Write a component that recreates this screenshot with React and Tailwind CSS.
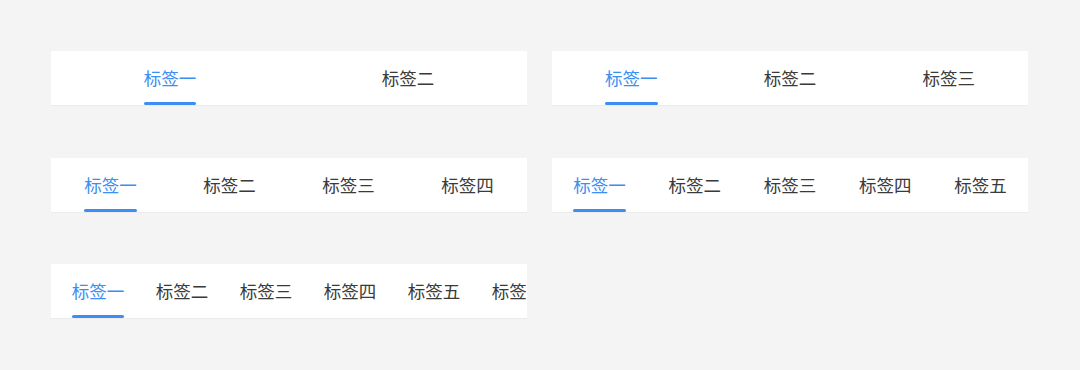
import React from 'react';

const LABELS = ['标签一', '标签二', '标签三', '标签四', '标签五', '标签六'];

const TabBar = ({ count, scroll = false }) => {
    const tabs = LABELS.slice(0, count);
    return (
        <div className="h-[54px] bg-white shadow-[0_1px_0_#ececec] overflow-hidden">
            <div className={scroll ? 'flex h-full pl-[5px]' : 'flex h-full'}>
                {tabs.map((label, i) => (
                    <div
                        key={label}
                        className={`${scroll ? 'w-[84px] shrink-0' : 'flex-1'} flex justify-center h-full`}
                    >
                        <div className="relative flex items-center h-full">
                            <span
                                className={`text-[17.5px] leading-none ${i === 0 ? 'text-[#3b8ef2]' : 'text-[#3a3a3a]'}`}
                            >
                                {label}
                            </span>
                            {i === 0 && (
                                <span className="absolute left-0 right-0 bottom-0 h-[3px] rounded-full bg-[#3b8ef2]" />
                            )}
                        </div>
                    </div>
                ))}
            </div>
        </div>
    );
};

export default function App() {
    return (
        <div
            className="w-[1080px] h-[370px] bg-[#f4f4f4] pt-[51px] pl-[51px]"
            style={{ fontFamily: '"Noto Sans CJK SC", "Noto Sans", sans-serif' }}
        >
            <div className="grid grid-cols-[476px_476px] gap-x-[25px] gap-y-[52.5px]">
                <TabBar count={2} />
                <TabBar count={3} />
                <TabBar count={4} />
                <TabBar count={5} />
                <TabBar count={6} scroll />
            </div>
        </div>
    );
}
